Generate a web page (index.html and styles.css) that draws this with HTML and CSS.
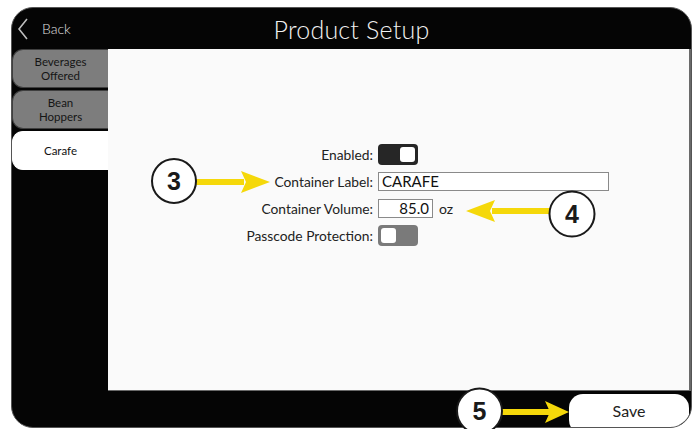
FILE: index.html
```html
<!DOCTYPE html>
<html>
<head>
<meta charset="utf-8">
<link rel="stylesheet" href="styles.css">
</head>
<body>
<div class="device">
  <header class="topbar">
    <div class="back">
      <svg class="chev" width="12" height="22" viewBox="0 0 12 22"><polyline points="10,1 2,11 10,21" fill="none" stroke="#bdbdbd" stroke-width="1.6"/></svg>
      <span>Back</span>
    </div>
    <h1 class="title">Product Setup</h1>
    <div class="spacer"></div>
  </header>
  <div class="main">
    <nav class="tabs">
      <div class="tab">Beverages<br>Offered</div>
      <div class="tab">Bean<br>Hoppers</div>
      <div class="tab active">Carafe</div>
    </nav>
    <section class="content">
      <div class="form">
        <span class="lbl">Enabled:</span>
        <div class="ctl"><div class="toggle on"><span class="knob"></span></div></div>
        <span class="lbl">Container Label:</span>
        <div class="ctl"><div class="input wide">CARAFE</div></div>
        <span class="lbl">Container Volume:</span>
        <div class="ctl"><div class="input num">85.0</div><span class="unit">oz</span></div>
        <span class="lbl">Passcode Protection:</span>
        <div class="ctl"><div class="toggle off"><span class="knob"></span></div></div>
      </div>
    </section>
  </div>
  <footer class="bottombar">
    <button class="save">Save</button>
  </footer>
</div>
<svg class="callouts" width="696" height="429" viewBox="0 0 696 429">
  <g fill="#f5d80a">
    <rect x="196" y="179" width="48" height="6"/>
    <polygon points="241,171 270,182 241,193 246,182"/>
    <rect x="492" y="208" width="58" height="6"/>
    <polygon points="495,200 466,211 495,222 490,211"/>
    <rect x="500" y="409" width="50" height="6"/>
    <polygon points="545,401 569,412 545,423 550,412"/>
  </g>
  <g fill="#fff" stroke="#1a1a1a" stroke-width="2">
    <circle cx="174" cy="181" r="22"/>
    <circle cx="572" cy="214" r="22.5"/>
    <circle cx="479.5" cy="411" r="22.5"/>
  </g>
  <g class="num" text-anchor="middle">
    <text x="174" y="190">3</text>
    <text x="572" y="223">4</text>
    <text x="479.5" y="420">5</text>
  </g>
</svg>
</body>
</html>
```
FILE: styles.css
```css
html, body {
  margin: 0;
  padding: 0;
  background: #fff;
}
body {
  padding: 7px 0 0 11px;
  height: 429px;
  box-sizing: border-box;
  overflow: hidden;
  position: relative;
  font-family: Lato, "Open Sans", sans-serif;
}
.device {
  width: 681px;
  height: 421px;
  box-sizing: border-box;
  background: #050505;
  border: 1px solid #555;
  border-radius: 22px;
  overflow: hidden;
  display: flex;
  flex-direction: column;
}
.topbar {
  height: 41px;
  flex: none;
  display: grid;
  grid-template-columns: 1fr auto 1fr;
  align-items: center;
  color: #eee;
}
.back {
  display: flex;
  align-items: center;
  padding-left: 5px;
  gap: 13px;
  font-size: 14px;
  font-weight: 300;
  color: #e0e0e0;
}
.chev { display: block; margin-top: 1px; }
.title {
  margin: 0;
  font-size: 25px;
  font-weight: 300;
  letter-spacing: 0.2px;
  color: #f2f2f2;
  padding-top: 1px;
}
.main {
  display: flex;
  height: 342px;
  flex: none;
}
.tabs {
  width: 96px;
  flex: none;
  display: flex;
  flex-direction: column;
  gap: 2px;
}
.tab {
  height: 39px;
  box-sizing: border-box;
  background: #7d7d7d;
  border: 1px solid #3f3f3f;
  border-right: none;
  border-radius: 11px 0 0 11px;
  display: flex;
  align-items: center;
  justify-content: center;
  text-align: center;
  font-size: 11.5px;
  line-height: 14px;
  color: #151515;
}
.tab.active {
  background: #fff;
  border-color: #fff;
  color: #111;
}
.content {
  flex: 1;
  background: #fafafa;
  border-right: 2px solid #6a6a6a;
  border-bottom: 1px solid #6a6a6a;
  box-sizing: border-box;
  padding-top: 92px;
}
.form {
  display: grid;
  grid-template-columns: 265px 1fr;
  grid-auto-rows: 27px;
  column-gap: 5px;
  align-items: center;
}
.lbl {
  text-align: right;
  font-size: 13.8px;
  color: #222;
}
.ctl {
  display: flex;
  align-items: center;
  gap: 6px;
}
.toggle {
  width: 40px;
  height: 21px;
  box-sizing: border-box;
  border-radius: 4px;
  padding: 3px;
  display: flex;
}
.toggle.on { background: #262626; justify-content: flex-end; }
.toggle.off { background: #7a7a7a; justify-content: flex-start; }
.knob {
  width: 15px;
  height: 15px;
  background: #fff;
  border-radius: 3px;
}
.input {
  height: 19px;
  box-sizing: border-box;
  border: 1px solid #8a8a8a;
  background: #fff;
  font-size: 15px;
  line-height: 17px;
  color: #111;
}
.input.wide { width: 231px; padding-left: 3px; }
.input.num { width: 55px; text-align: right; padding-right: 3px; }
.unit { font-size: 14px; color: #222; }
.bottombar {
  flex: 1;
  display: flex;
  justify-content: flex-end;
  align-items: flex-start;
  padding: 3px 2px 0 0;
}
.save {
  width: 120px;
  height: 40px;
  border: none;
  border-radius: 14px;
  background: #fff;
  font-family: Lato, "Open Sans", sans-serif;
  font-size: 16px;
  color: #222;
  padding: 0 0 8px 0;
}
.callouts {
  position: absolute;
  left: 0;
  top: 0;
  pointer-events: none;
}
.num text {
  font-family: "Liberation Sans", Arial, sans-serif;
  font-weight: bold;
  font-size: 25px;
  fill: #1a1a1a;
}
```
